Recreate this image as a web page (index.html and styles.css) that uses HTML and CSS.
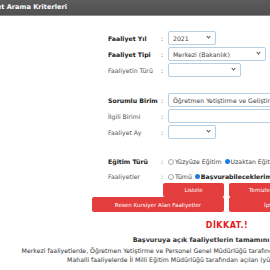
FILE: index.html
```html
<!DOCTYPE html>
<html lang="tr">
<head>
    <meta charset="UTF-8">
    <meta name="viewport" content="width=device-width, initial-scale=1.0">
    <title>Faaliyet Arama</title>
    <link rel="stylesheet" href="styles.css">
</head>
<body>
    <div class="page">
        <div class="panel-title">Faaliyet Arama Kriterleri</div>

        <form class="search">
            <div class="row">
                <label class="strong">Faaliyet Yıl</label><span class="colon">:</span>
                <span class="sel w48"><select><option>2021</option></select></span>
            </div>
            <div class="row">
                <label class="strong">Faaliyet Tipi</label><span class="colon">:</span>
                <span class="sel w98"><select><option>Merkezi (Bakanlık)</option></select></span>
            </div>
            <div class="row">
                <label>Faaliyetin Türü</label><span class="colon">:</span>
                <span class="sel w73"><select><option></option></select></span>
            </div>

            <div class="spacer"></div>

            <div class="row">
                <label class="strong">Sorumlu Birim</label><span class="colon">:</span>
                <input class="box wide" type="text" value="Öğretmen Yetiştirme ve Geliştirme Genel Müdürlüğü">
            </div>
            <div class="row">
                <label>İlgili Birimi</label><span class="colon">:</span>
                <input class="box wide" type="text">
            </div>
            <div class="row">
                <label>Faaliyet Ay</label><span class="colon">:</span>
                <span class="sel w48"><select><option></option></select></span>
            </div>

            <div class="spacer"></div>

            <div class="row short">
                <label class="strong">Eğitim Türü</label><span class="colon">:</span>
                <span class="radios">
                    <span class="radio"></span>Yüzyüze Eğitim
                    <span class="radio on"></span>Uzaktan Eğitim
                </span>
            </div>
            <div class="row short">
                <label>Faaliyetler</label><span class="colon">:</span>
                <span class="radios">
                    <span class="radio"></span>Tümü
                    <span class="radio on"></span><b>Başvurabileceklerim</b>
                </span>
            </div>

            <div class="buttons">
                <button type="button" class="btn small left">Listele</button>
                <button type="button" class="btn small">Temizle</button>
                <button type="button" class="btn">Resen Kursiyer Alan Faaliyetler</button>
                <button type="button" class="btn">İptal Edilen Faaliyetler</button>
            </div>
        </form>

        <div class="notice">
            <h3>DİKKAT.!</h3>
            <p class="lead">Başvuruya açık faaliyetlerin tamamını görebilirsiniz.</p>
            <p>Merkezi faaliyetlerde, Öğretmen Yetiştirme ve Personel Genel Müdürlüğü tarafından açılan (yüzyüze ve uzaktan) faaliyetler listelenir.</p>
            <p>Mahalli faaliyelerde İl Milli Eğitim Müdürlüğü tarafından açılan (yüzyüze) faaliyetler de listelenmektedir.</p>
        </div>
    </div>
</body>
</html>
```

FILE: styles.css
```css
body {
    margin: 0;
    overflow: hidden;
    background: #fff;
    font-family: "DejaVu Sans", Verdana, sans-serif;
    font-size: 6.2px;
    color: #222;
}
.page {
    width: 514px;
    margin-left: -30px;
}
.panel-title {
    height: 15px;
    line-height: 15px;
    padding-left: 5px;
    background: linear-gradient(#5c5c5c, #505050);
    border-bottom: 1px solid #8a8a8a;
    color: #fff;
    font-weight: bold;
    font-size: 6.6px;
}
.search {
    padding: 14px 0 0 138px;
}
.row {
    display: flex;
    align-items: center;
    height: 16px;
    white-space: nowrap;
}
.row.short {
    height: 15px;
}
.row label {
    width: 53px;
    color: #555;
}
.row label.strong {
    font-weight: bold;
    color: #222;
}
.colon {
    width: 7px;
    color: #333;
}
.spacer {
    height: 14px;
}
.sel {
    position: relative;
    display: inline-block;
    height: 14px;
}
.sel select {
    appearance: none;
    -webkit-appearance: none;
    width: 100%;
    height: 14px;
    margin: 0;
    padding: 0 0 0 4px;
    border: 1px solid #b6cfe2;
    border-radius: 2px;
    background: #fff;
    font-family: inherit;
    font-size: 6.2px;
    color: #444;
}
.sel::after {
    content: "";
    position: absolute;
    right: 6px;
    top: 4px;
    width: 2px;
    height: 2px;
    border-right: 1px solid #555;
    border-bottom: 1px solid #555;
    transform: rotate(45deg);
}
.w48 { width: 48px; }
.w73 { width: 73px; }
.w98 { width: 98px; }
.box {
    height: 14px;
    box-sizing: border-box;
    margin: 0;
    padding: 0 0 0 4px;
    border: 1px solid #b6cfe2;
    border-radius: 2px;
    font-family: inherit;
    font-size: 6.2px;
    color: #444;
}
.wide {
    width: 170px;
}
.radios {
    display: flex;
    align-items: center;
    color: #444;
}
.radio {
    width: 4px;
    height: 4px;
    margin: 0 1px 0 0;
    border: 1px solid #aaa;
    border-radius: 50%;
    background: #fff;
}
.radios .radio.on {
    margin-left: 3px;
}
.radio.on {
    width: 5px;
    height: 5px;
    border: none;
    background: #1a7fe0;
}
.radios b {
    color: #222;
}
.buttons {
    display: grid;
    grid-template-columns: 132px 132px;
    column-gap: 5px;
    margin: -1px 0 0 -16px;
}
.btn {
    height: 15px;
    margin: 0;
    padding: 0;
    border: none;
    border-radius: 2px;
    background: #e33d3d;
    color: #fff;
    font-family: inherit;
    font-size: 5.6px;
    cursor: pointer;
}
.btn.small {
    width: 61px;
    height: 14px;
    justify-self: start;
}
.btn.small.left {
    justify-self: end;
}
.notice {
    text-align: center;
    color: #333;
    margin-top: 9px;
}
.notice h3 {
    margin: 0 0 6px;
    color: #e31b1b;
    font-size: 8px;
    letter-spacing: 0.5px;
}
.notice p {
    margin: 0;
    line-height: 9.5px;
    white-space: nowrap;
}
.notice p.lead {
    font-weight: bold;
    font-size: 6.4px;
}
```
